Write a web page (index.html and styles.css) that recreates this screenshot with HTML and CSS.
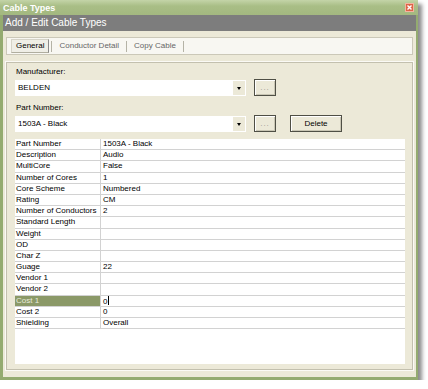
FILE: index.html
```html
<!DOCTYPE html>
<html lang="en">
<head>
  <meta charset="UTF-8" />
  <title>Cable Types</title>
  <link rel="stylesheet" href="styles.css">
</head>
<body>
  <div class="window">
    <div class="title-bar">
      <span class="title">Cable Types</span>
      <svg class="close-btn" width="9" height="9" viewBox="0 0 9 9">
        <rect x="0.5" y="0.5" width="8" height="8" fill="#dd6547" stroke="#f3b3a0" />
        <path d="M2.5 2.5 L6.5 6.5 M6.5 2.5 L2.5 6.5" stroke="#fff" stroke-width="1.4" />
      </svg>
    </div>
    <div class="header-band">Add / Edit Cable Types</div>

    <div class="client">
      <div class="tab-strip">
        <span class="tab active">General</span>
        <span class="tab-sep"></span>
        <span class="tab">Conductor Detail</span>
        <span class="tab-sep"></span>
        <span class="tab">Copy Cable</span>
        <span class="tab-sep"></span>
      </div>

      <div class="panel">
        <label class="field-label">Manufacturer:</label>
        <div class="field-row">
          <div class="combo">
            <span class="combo-text">BELDEN</span>
            <span class="combo-arrow"></span>
          </div>
          <button class="btn btn-dots">...</button>
        </div>

        <label class="field-label">Part Number:</label>
        <div class="field-row">
          <div class="combo">
            <span class="combo-text">1503A - Black</span>
            <span class="combo-arrow"></span>
          </div>
          <button class="btn btn-dots">...</button>
          <button class="btn btn-delete">Delete</button>
        </div>

        <div class="props">
          <div class="prop-row"><span class="prop-name">Part Number</span><span class="prop-value">1503A - Black</span></div>
          <div class="prop-row"><span class="prop-name">Description</span><span class="prop-value">Audio</span></div>
          <div class="prop-row"><span class="prop-name">MultiCore</span><span class="prop-value">False</span></div>
          <div class="prop-row"><span class="prop-name">Number of Cores</span><span class="prop-value">1</span></div>
          <div class="prop-row"><span class="prop-name">Core Scheme</span><span class="prop-value">Numbered</span></div>
          <div class="prop-row"><span class="prop-name">Rating</span><span class="prop-value">CM</span></div>
          <div class="prop-row"><span class="prop-name">Number of Conductors</span><span class="prop-value">2</span></div>
          <div class="prop-row"><span class="prop-name">Standard Length</span><span class="prop-value"></span></div>
          <div class="prop-row"><span class="prop-name">Weight</span><span class="prop-value"></span></div>
          <div class="prop-row"><span class="prop-name">OD</span><span class="prop-value"></span></div>
          <div class="prop-row"><span class="prop-name">Char Z</span><span class="prop-value"></span></div>
          <div class="prop-row"><span class="prop-name">Guage</span><span class="prop-value">22</span></div>
          <div class="prop-row"><span class="prop-name">Vendor 1</span><span class="prop-value"></span></div>
          <div class="prop-row"><span class="prop-name">Vendor 2</span><span class="prop-value"></span></div>
          <div class="prop-row selected"><span class="prop-name">Cost 1</span><span class="prop-value">0<span class="caret"></span></span></div>
          <div class="prop-row"><span class="prop-name">Cost 2</span><span class="prop-value">0</span></div>
          <div class="prop-row"><span class="prop-name">Shielding</span><span class="prop-value">Overall</span></div>
        </div>
      </div>
    </div>
  </div>
</body>
</html>
```

FILE: styles.css
```css
/* Global */
* {
  box-sizing: border-box;
  margin: 0;
  padding: 0;
}
body {
  background: #fff;
  font-family: "Liberation Sans", Arial, sans-serif;
  font-size: 8px;
  color: #000;
}

/* Window frame */
.window {
  width: 418px;
  height: 380px;
  display: flex;
  flex-direction: column;
  background: #94ab70;
  padding: 0 2px 3px 3px;
  box-shadow: 4px 4px 4px rgba(0, 0, 0, 0.45);
}
.title-bar {
  height: 15px;
  display: flex;
  align-items: center;
  justify-content: space-between;
  margin: 0 -2px 0 -3px;
  padding: 0 4px 0 3px;
  background: linear-gradient(#c4d4a8, #a9be86 40%, #a3b880);
}
.title {
  color: #fff;
  font-weight: bold;
  font-size: 9px;
}
.close-btn {
  display: block;
}
.header-band {
  height: 16px;
  background: #7d7d7d;
  color: #fff;
  font-size: 10px;
  line-height: 16px;
  padding-left: 2px;
}

/* Client area */
.client {
  flex: 1;
  display: flex;
  flex-direction: column;
  background: #ece9d8;
  padding: 6px 3px 7px 3px;
}
.tab-strip {
  height: 18px;
  display: flex;
  align-items: center;
  background: #f8f7f2;
  border: 1px solid #cbc8b8;
  padding-left: 4px;
}
.tab {
  color: #666;
  padding: 0 5px;
  line-height: 12px;
}
.tab.active {
  color: #000;
  background: #efeee6;
  border: 1px solid #d6d4c8;
  border-right-color: #8a8a8a;
  border-bottom-color: #b0ae9f;
  padding: 0 4px;
}
.tab-sep {
  width: 1px;
  height: 11px;
  background: #b5b3a6;
  margin: 0 2px;
}

/* Main panel */
.panel {
  flex: 1;
  display: flex;
  flex-direction: column;
  margin-top: 7px;
  border: 1px solid #c3c0ae;
  box-shadow: 0 0 0 1px #fbfaf5;
  padding: 3px 7px 5px 8px;
}
.field-label {
  display: block;
  line-height: 11px;
  padding-left: 1px;
  margin-bottom: 2px;
}
.field-row {
  display: flex;
  align-items: center;
  gap: 8px;
  height: 17px;
  margin-bottom: 5px;
}
.field-row + .field-label {
  margin-top: 1px;
}
.combo {
  width: 231px;
  height: 16px;
  display: flex;
  background: #fff;
}
.combo-text {
  flex: 1;
  line-height: 16px;
  padding-left: 3px;
}
.combo-arrow {
  width: 14px;
  background: #ece9d8;
  border: 1px solid #fff;
  position: relative;
}
.combo-arrow::after {
  content: "";
  position: absolute;
  left: 4px;
  top: 6px;
  border-left: 2px solid transparent;
  border-right: 2px solid transparent;
  border-top: 3px solid #000;
}
.btn {
  height: 17px;
  font-family: "Liberation Sans", Arial, sans-serif;
  font-size: 8px;
  background: #ece9d8;
  border: 1px solid #4f4f45;
  box-shadow: inset 1px 1px 0 #fff, inset -1px -1px 0 #c9c6b4;
}
.btn-dots {
  width: 22px;
  color: #9a9a90;
  letter-spacing: 1px;
}
.btn-delete {
  width: 52px;
  margin-left: 6px;
  color: #000;
}

/* Property grid */
.props {
  flex: 1;
  background: #fff;
  margin-top: 2px;
}
.prop-row {
  display: flex;
  height: 11.2px;
  border-bottom: 1px solid #d2d2d2;
}
.prop-name {
  width: 86px;
  padding-left: 1px;
  border-right: 1px solid #d2d2d2;
  line-height: 10px;
  white-space: nowrap;
}
.prop-value {
  flex: 1;
  padding-left: 2px;
  line-height: 10px;
}
.prop-row.selected .prop-name {
  background: #8b9968;
  color: #e9ecdc;
}
.caret {
  display: inline-block;
  width: 1px;
  height: 9px;
  background: #000;
  vertical-align: -1px;
  margin-left: 1px;
}
```
